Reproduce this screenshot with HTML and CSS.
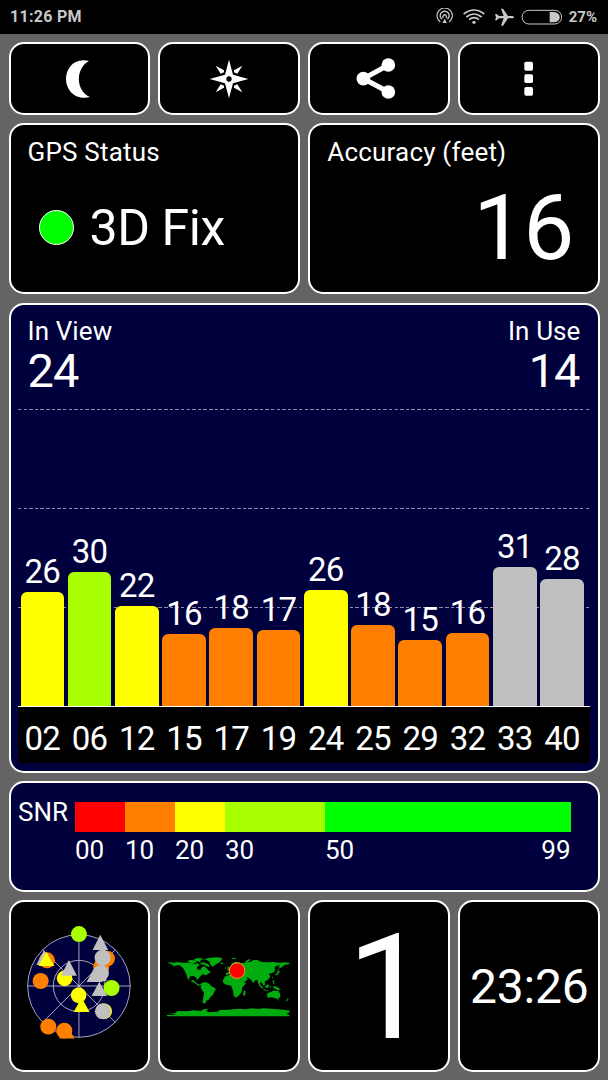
FILE: index.html
```html
<!DOCTYPE html>
<html lang="en">
<head>
<meta charset="utf-8">
<title>GPS Test</title>
<link rel="stylesheet" href="styles.css">
</head>
<body>
<header class="status-bar">
  <span class="clock">11:26 PM</span>
  <svg class="status-icons" width="130" height="20" viewBox="0 0 390 60" fill="none" stroke="#c8c8c8">
    <g stroke-width="3.5">
      <path d="M13 42a23 23 0 1 1 26 0"/>
      <path d="M18 34a13.500 13.500 0 1 1 16 0" stroke-width="4"/>
      <path d="M22 30a5.500 5.500 0 1 1 8 0" stroke-width="4"/>
    </g>
    <path d="M26 32l7 13h-14z" fill="#c8c8c8" stroke="none"/>
    <path d="M83 18q31-24 62 0" stroke-width="5"/>
    <path d="M91 27q23-18 46 0M99 35q15-12 30 0" stroke-width="5"/>
    <circle cx="114" cy="43" r="5" fill="#c8c8c8" stroke="none"/>
    <path d="M177 18h5l7 6h14l-8-22h6l15 22h11q7 0 7 3.500t-7 3.500h-11l-15 22h-6l8-22h-14l-7 6h-5l3-9.500z" fill="#c8c8c8" stroke="none"/>
    <rect x="258" y="7" width="119" height="41" rx="20.500" stroke-width="3"/>
    <path d="M341 12h14q16 3 16 15.500t-16 15.500h-14z" fill="#c8c8c8" stroke="none"/>
  </svg>
  <span class="battery">27%</span>
</header>

<main class="dashboard">
  <button class="card tool" aria-label="Night mode">
    <svg class="tool-icon" viewBox="-60 -60 120 120" fill="#fff"><path d="M30-54C-16-65-39-30-39 0S-14 66 33 54C-10 38-12-32 30-54z"/></svg>
  </button>
  <button class="card tool" aria-label="Compass">
    <svg class="tool-icon" viewBox="-60 -60 120 120" fill="#fff">
      <path fill-rule="evenodd" d="M0-58L12-13 58 0 12 13 0 58-12 13-58 0-12-13zM0-8a8 8 0 1 0 0 16 8 8 0 0 0 0-16z"/>
      <path d="M40-40L25-16 15-20V-26zM-40-40L-25-16-15-20V-26zM40 40L25 16 15 20V26zM-40 40L-25 16-15 20V26z"/>
    </svg>
  </button>
  <button class="card tool" aria-label="Share">
    <svg class="tool-icon" viewBox="-52 -59 120 120" overflow="visible" fill="#fff">
      <path d="M36-41L-38 0 36 40" fill="none" stroke="#fff" stroke-width="15"/>
      <circle cx="36" cy="-41" r="20.500"/><circle cx="-39" cy="0" r="20.500"/><circle cx="36" cy="40" r="20.500"/>
    </svg>
  </button>
  <button class="card tool" aria-label="More options">
    <svg class="tool-icon" viewBox="-59 -59 120 120" fill="#fff">
      <rect x="-13" y="-51" width="26" height="27" rx="5"/><rect x="-13" y="-13" width="26" height="26" rx="5"/><rect x="-13" y="25" width="26" height="26" rx="5"/>
    </svg>
  </button>

  <section class="card half">
    <h2 class="title">GPS Status</h2>
    <div class="fix"><i class="fix-dot"></i><span class="fix-text">3D Fix</span></div>
  </section>
  <section class="card half">
    <h2 class="title">Accuracy (feet)</h2>
    <div class="accuracy">16</div>
  </section>

  <section class="card navy wide signal">
    <div class="counts">
      <div><h2 class="title">In View</h2><div class="count">24</div></div>
      <div class="right"><h2 class="title">In Use</h2><div class="count">14</div></div>
    </div>
    <div class="plot">
      <div class="gridlines"><i></i><i></i><i></i></div>
      <div class="bars">
        <div class="sat"><span>26</span><i class="bar yellow" style="height:113.800px"></i></div>
        <div class="sat"><span>30</span><i class="bar lime" style="height:133.300px"></i></div>
        <div class="sat"><span>22</span><i class="bar yellow" style="height:99.800px"></i></div>
        <div class="sat"><span>16</span><i class="bar orange" style="height:71.700px"></i></div>
        <div class="sat"><span>18</span><i class="bar orange" style="height:78px"></i></div>
        <div class="sat"><span>17</span><i class="bar orange" style="height:75.500px"></i></div>
        <div class="sat"><span>26</span><i class="bar yellow" style="height:115.500px"></i></div>
        <div class="sat"><span>18</span><i class="bar orange" style="height:80.500px"></i></div>
        <div class="sat"><span>15</span><i class="bar orange" style="height:66px"></i></div>
        <div class="sat"><span>16</span><i class="bar orange" style="height:73px"></i></div>
        <div class="sat"><span>31</span><i class="bar gray" style="height:138.800px"></i></div>
        <div class="sat"><span>28</span><i class="bar gray" style="height:126.500px"></i></div>
      </div>
    </div>
    <div class="ids">
      <span>02</span><span>06</span><span>12</span><span>15</span><span>17</span><span>19</span><span>24</span><span>25</span><span>29</span><span>32</span><span>33</span><span>40</span>
    </div>
  </section>

  <section class="card navy wide snr">
    <span class="snr-name">SNR</span>
    <div class="scale">
      <i class="red"></i><i class="orange"></i><i class="yellow"></i><i class="lime"></i><i class="green"></i>
      <span>00</span><span>10</span><span>20</span><span>30</span><span class="ends"><b>50</b><b>99</b></span>
    </div>
  </section>

  <section class="card">
    <svg class="tile" viewBox="3 6 412.500 504">
      <circle cx="207" cy="258" r="154" fill="#00003c"/>
      <g fill="none" stroke="#c4c4dc" stroke-width="2.500">
        <circle cx="207" cy="258" r="154"/><circle cx="207" cy="258" r="77"/>
        <path d="M207 104V412M53 258H361M98 149L316 367M316 149L98 367"/>
      </g>
      <g fill="#ff8000"><circle cx="111" cy="181" r="24"/><circle cx="92" cy="243" r="24"/><circle cx="115" cy="380" r="24"/><circle cx="163" cy="392" r="24"/><path d="M170 373l24 43h-47z"/><circle cx="291" cy="176" r="24"/><circle cx="274" cy="201" r="24"/></g>
      <g fill="#ff0"><circle cx="164" cy="235" r="23.500"/><circle cx="206" cy="286" r="23.500"/><path d="M215 293l24 43h-48z"/><circle cx="283" cy="334" r="23.500"/></g>
      <g fill="#a8ff00"><circle cx="207" cy="102" r="24"/><circle cx="305" cy="264" r="24"/></g>
      <g fill="#c0c0c0">
        <path d="M102 151l24 44H79zM271 104l24 46h-47zM177 180l24 47h-48zM268 245l24 43h-47zM254 202l24 44h-48zM267 197l24 46h-48z"/>
        <circle cx="278" cy="173" r="24"/><circle cx="273" cy="219" r="24"/><circle cx="279" cy="334" r="24"/>
      </g>
      <path d="M109 155l24 43H86z" fill="#ff0"/>
    </svg>
  </section>
  <section class="card">
    <svg class="tile" viewBox="7.500 -114 412.500 504">
      <g fill="#00ac10">
        <path d="M28 69L42 66 47 69 60 66 76 68 90 68 104 70 113 71 122 70 126 76 119 81 119 87 128 91 132 83 138 79 145 82 150 88 160 97 151 101 147 106 135 103 126 112 119 120 116 113 109 108 98 109 94 117 101 123 109 119 111 124 117 129 124 134 132 130 131 134 123 138 112 129 100 124 91 116 85 99 76 83 65 75 54 77 45 81 49 76 42 75 42 71z"/>
        <path d="M90 63l9-3 12 1 8 6-15 3-10-3zM108 58l16-4 17 2-11 4-2 7-11-3zM127 70l11-3 15 6 4 8-10-2-7-5-10-1zM140 58l16-5 25-1 14 3-8 12-10 5-11 8-7-6-3-9-7-4z"/>
        <path d="M190 68l8 1-3 4-6-2zM210 78l6 4 2 8-9 2 2-5zM203 82l4 2-3 4zM222 56l8-3 9 2-11 3zM264 63l12-5 5 1-15 9z"/>
        <path d="M132 129L143 126 156 131 161 138 173 144 175 148 170 155 168 163 159 171 153 180 146 182 144 191 135 188 137 175 140 159 133 149 130 142z"/>
        <path d="M206 98L218 95 222 87 215 85 221 77 222 71 232 66 242 66 249 70 259 69 269 66 278 66 287 61 299 59 310 65 329 67 348 66 365 68 383 67 396 68 396 73 383 74 376 79 367 86 364 78 371 74 357 78 350 84 354 88 348 98 339 100 334 102 339 109 332 119 325 123 321 125 324 132 319 137 314 129 310 125 307 133 313 143 308 140 302 130 300 119 293 121 287 130 282 120 274 114 267 111 271 118 265 124 254 128 249 114 250 110 245 107 233 104 224 103 218 101 209 105 204 103z"/>
        <path d="M203 109L219 104 231 109 246 110 254 126 267 128 254 143 253 155 245 166 236 173 229 168 226 151 221 137 202 133 196 126 198 117zM260 151l5 3-3 14-6-4z"/>
        <path d="M360 91l7 3-2 6-7 6-7-1 9-6zM361 81l3 8-2 3zM344 111l3-1-1 7zM345 121l5 1 1 12-4-6zM309 134l9 10-3 2-9-10zM324 137l8-4 3 4-4 7-8-2zM336 139l5-1-2 8zM318 148l17 4-5 1-12-2zM347 138l11 2 13 9-11 1-12-6z"/>
        <path d="M330 160L342 155 350 151 358 154 363 151 368 162 369 170 362 177 353 175 343 172 331 173 329 167zM360 178l5 1-3 3zM390 174l4 4-5 5-5 1 6-6z"/>
        <path d="M28 218L53 219 61 213 88 214 108 211 130 213 138 208 153 206 146 212 154 217 180 215 187 210 214 209 233 207 250 206 263 208 283 205 302 207 319 205 352 207 378 209 397 212 397 217 387 221 396 225V229H28V225H45L56 222z"/>
      </g>
      <circle cx="239" cy="92" r="23.500" fill="#f00" stroke="#e0a820" stroke-width="3"/>
    </svg>
  </section>
  <section class="card center"><span class="big-one">1</span></section>
  <section class="card center"><span class="time">23:26</span></section>
</main>
</body>
</html>
```
FILE: styles.css
```css
* { box-sizing: border-box; }
body {
  margin: 0;
  width: 608px;
  height: 1080px;
  overflow: hidden;
  background: #646464;
  color: #fff;
  font-family: Roboto, "Liberation Sans", sans-serif;
}
h2, b { margin: 0; font-weight: 400; }
i { display: block; }

.status-bar {
  height: 34px;
  padding: 0 11px 0 10px;
  background: #000;
  color: #c8c8c8;
  display: flex;
  align-items: center;
  font-weight: 700;
}
.clock { flex: 1; font-size: 16px; line-height: 36px; letter-spacing: 0.3px; }
.status-icons { margin: 2px 3px 0 0; }
.battery { font-size: 15px; line-height: 36px; }

.dashboard {
  display: grid;
  grid-template-columns: repeat(4, 1fr);
  grid-template-rows: 73px 171px 470px 111px 172px;
  gap: 8.250px 8.500px;
  padding: 8px 8.500px;
}
.card {
  border: 2px solid #fff;
  border-radius: 15px;
  background: #000;
  min-width: 0;
}
.navy { background: #00003c; }
.wide { grid-column: span 4; }
.tool { padding: 0; display: flex; align-items: center; justify-content: center; }
.tool-icon { width: 40px; height: 40px; }

.half { grid-column: span 2; padding: 12px 22px 0 17px; }
.title { font-size: 26px; line-height: 30px; letter-spacing: 0.2px; }
.fix { display: flex; align-items: center; gap: 16px; margin: 31px 0 0 11px; }
.fix-dot { width: 35px; height: 35px; margin-bottom: 2px; border: 1px solid #fff; border-radius: 50%; background: #0f0; }
.fix-text { font-size: 50px; line-height: 60px; letter-spacing: -0.4px; }
.accuracy { margin: 11px 2px 0 0; font-size: 91px; line-height: 100px; letter-spacing: -1px; text-align: right; }

.signal { padding: 0 7.500px; }
.counts { height: 104px; padding: 11px 9.500px 0; display: flex; justify-content: space-between; }
.counts .title { letter-spacing: 0.1px; }
.right { text-align: right; }
.count { margin-top: 2px; font-size: 47px; line-height: 46px; letter-spacing: -1px; }
.right .count { margin-right: 1px; }
.plot { position: relative; height: 297px; }
.gridlines { position: absolute; inset: 0; display: grid; grid-template-rows: repeat(3, 1fr); }
.gridlines i {
  height: 1px;
  background: repeating-linear-gradient(90deg, #8c8cae 0 3.500px, transparent 3.500px 5.620px);
}
.bars, .ids { display: grid; grid-template-columns: repeat(12, 43.700px); column-gap: 3.550px; padding-left: 2.500px; }
.bars { position: relative; height: 100%; align-items: end; }
.sat span { display: block; margin-bottom: 4px; font-size: 33px; line-height: 32px; letter-spacing: -0.8px; text-align: center; }
.bar { border-radius: 6px 6px 0 0; }
.ids {
  height: 57px;
  padding-top: 7px;
  border-top: 1px solid #fff;
  background: #000;
  font-size: 33px;
  line-height: 50px;
  letter-spacing: -0.8px;
  text-align: center;
}
.red { background: #f00; }
.orange { background: #ff8000; }
.yellow { background: #ff0; }
.lime { background: #a8ff00; }
.green { background: #0f0; }
.gray { background: #c0c0c0; }

.snr { padding: 14px 27px 0 7.500px; display: flex; justify-content: space-between; font-size: 26px; line-height: 30px; }
.scale {
  width: 496px;
  padding-top: 5px;
  display: grid;
  grid-template-columns: 50px 50px 50px 100px 1fr;
  grid-template-rows: 30px 30px;
  row-gap: 3px;
}
.scale span { padding-left: 0.5px; }
.ends { display: flex; justify-content: space-between; }

.tile { display: block; width: 100%; height: 100%; }
.center { display: flex; align-items: center; justify-content: center; }
.big-one { padding: 6px 0 0 18px; font-size: 146px; line-height: 150px; }
.time { padding: 2px 0 0 1px; font-size: 48px; line-height: 60px; letter-spacing: -0.2px; }
```
